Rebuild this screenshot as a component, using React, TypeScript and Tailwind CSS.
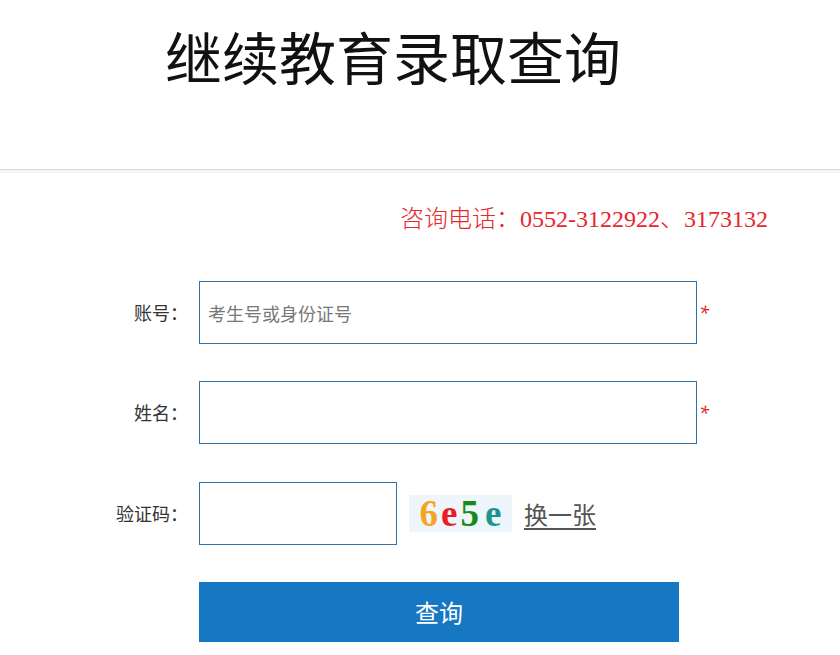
import { useState } from "react";

const cjk = "font-['Noto_Sans_CJK_SC',sans-serif]";
const serif = "font-['Liberation_Serif','Noto_Sans_CJK_SC',serif]";

function Field({ label, width, placeholder, required }: { label: string; width: string; placeholder?: string; required?: boolean }) {
  return (
    <div className="flex items-center">
      <label className={`w-[188px] text-right text-[18px] text-[#333] ${cjk}`}>{label}</label>
      <input
        placeholder={placeholder}
        className={`ml-[11px] h-[63px] ${width} border border-[#2f74ad] px-2 text-[18px] text-[#333] outline-none placeholder:text-[#777] ${cjk}`}
      />
      {required && <span className="ml-[2px] text-[18px] italic text-[#e0201b]">*</span>}
    </div>
  );
}

export default function App() {
  const [code, setCode] = useState(["6", "e", "5", "e"]);
  const colors = ["text-[#f5a524]", "text-[#ec1c24]", "text-[#178a17]", "text-[#1a9590]"];

  return (
    <div className="w-[840px] h-[655px] bg-white overflow-hidden">
      <div className="h-[169px] pl-[165px] pt-[15px]">
        <h1 className={`text-[57px] leading-[80px] text-[#111] ${cjk}`}>继续教育录取查询</h1>
      </div>
      <div className="h-[1px] bg-[#d9d9d9]"></div>
      <div className="h-[3px] bg-[#f6f6f6]"></div>

      <div className="flex justify-end pr-[72px] pt-[31px]">
        <p className={`text-[24px] leading-[30px] font-light text-[#e8262b] ${serif}`}>咨询电话：0552-3122922、3173132</p>
      </div>

      <div className="mt-[47px] flex flex-col gap-[37px]">
        <Field label="账号：" width="w-[498px]" placeholder="考生号或身份证号" required />
        <Field label="姓名：" width="w-[498px]" required />
        <div className="mt-[1px] flex items-center">
          <label className={`w-[188px] text-right text-[18px] text-[#333] ${cjk}`}>验证码：</label>
          <input className="ml-[11px] h-[63px] w-[198px] border border-[#2f74ad] px-2 outline-none" />
          <div className="ml-[12px] flex h-[37px] w-[103px] items-center justify-center gap-[3px] bg-[#eef6fb] font-['Liberation_Serif',serif] text-[37px] font-bold leading-none">
            {code.map((c, i) => (
              <span key={i} className={`${colors[i]} ${i === 3 ? "ml-[3px]" : ""}`}>{c}</span>
            ))}
          </div>
          <a
            href="#"
            onClick={e => { e.preventDefault(); setCode([...code]); }}
            className={`ml-[12px] text-[24px] text-[#555] underline underline-offset-4 ${cjk}`}
          >
            换一张
          </a>
        </div>
      </div>

      <div className="mt-[37px] pl-[199px]">
        <button className={`h-[60px] w-[480px] bg-[#1677c3] text-[24px] text-white ${cjk}`}>查询</button>
      </div>
    </div>
  );
}
